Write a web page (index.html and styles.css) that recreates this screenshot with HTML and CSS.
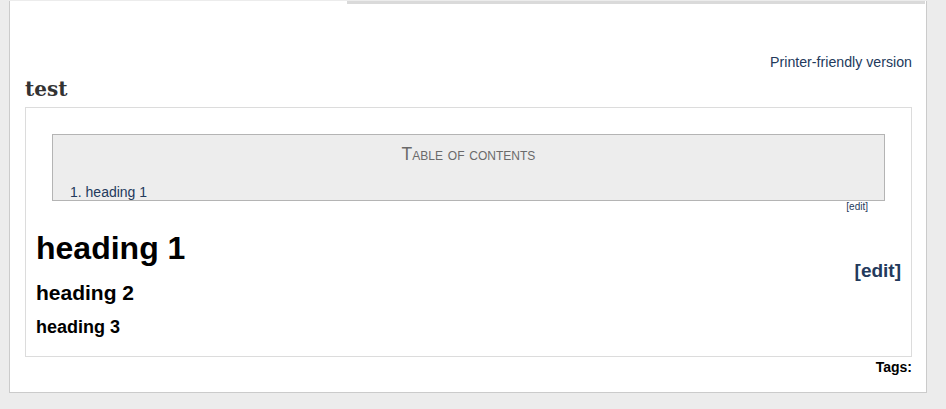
FILE: index.html
```html
<!DOCTYPE html>
<html>
<head>
<meta charset="utf-8">
<link rel="stylesheet" href="styles.css">
</head>
<body>
<div class="panel">
  <div class="topbar"></div>
  <div class="page">
    <div class="printer"><a href="#">Printer-friendly version</a></div>
    <h1 class="title">test</h1>
    <div class="content">
      <div class="toc">
        <div class="toc-title">Table of contents</div>
        <ol class="toc-list"><li><a href="#">heading 1</a></li></ol>
      </div>
      <div class="toc-edit"><a href="#">[edit]</a></div>
      <div class="sections">
        <a class="sec-edit" href="#">[edit]</a>
        <h1 class="h1">heading 1</h1>
        <h2 class="h2">heading 2</h2>
        <h3 class="h3">heading 3</h3>
      </div>
    </div>
    <div class="tags">Tags:</div>
  </div>
</div>
</body>
</html>
```

FILE: styles.css
```css
html, body { margin: 0; padding: 0; }
body {
  background: #ececec;
  font-family: "Liberation Sans", Arial, sans-serif;
  font-size: 14px;
  color: #000;
}
a { color: #233a5c; text-decoration: none; }
.panel {
  margin-left: 9px;
  width: 918px;
  box-sizing: border-box;
  background: #fff;
  border: 1px solid #cbcbcb;
  border-top: 0;
}
.topbar {
  margin: 1px 1px 0 337px;
  height: 3px;
  background: #dadada;
}
.page {
  padding: 0 14px 17px 15px;
}
.printer {
  margin-top: 50px;
  text-align: right;
  font-size: 14.2px;
  line-height: 16px;
}
.title {
  margin: 4px 0 3px 0;
  font-family: "DejaVu Serif", Georgia, serif;
  font-weight: bold;
  font-size: 20px;
  line-height: 30px;
  color: #333;
}
.content {
  border: 1px solid #dcdcdc;
}
.toc {
  margin: 26px 26px 0 26px;
  background: #ededed;
  border: 1px solid #b4b4b4;
  padding-top: 9px;
}
.toc-title {
  text-align: center;
  font-variant: small-caps;
  font-size: 17.5px;
  line-height: 20px;
  color: #6a6a6a;
}
.toc-list {
  margin: 20px 0 0 0;
  padding: 0 0 0 17px;
  list-style-position: inside;
  font-size: 14px;
  line-height: 16px;
  color: #233a5c;
}
.toc-edit {
  margin: 0 43px 0 0;
  text-align: right;
  font-size: 10px;
  line-height: 12px;
}
.sections {
  margin-top: 16px;
  padding: 0 10px 18px 10px;
}
.sec-edit {
  float: right;
  margin-top: 31px;
  font-weight: bold;
  font-size: 19px;
  line-height: 22px;
}
.h1 {
  margin: 0;
  font-size: 32px;
  line-height: 38px;
  font-weight: bold;
}
.h2 {
  margin: 13px 0 0 0;
  font-size: 21px;
  line-height: 25px;
  font-weight: bold;
}
.h3 {
  margin: 11px 0 0 0;
  font-size: 18px;
  line-height: 22px;
  font-weight: bold;
}
.tags {
  margin-top: 2px;
  text-align: right;
  font-weight: bold;
  font-size: 14px;
  line-height: 16px;
}
```
